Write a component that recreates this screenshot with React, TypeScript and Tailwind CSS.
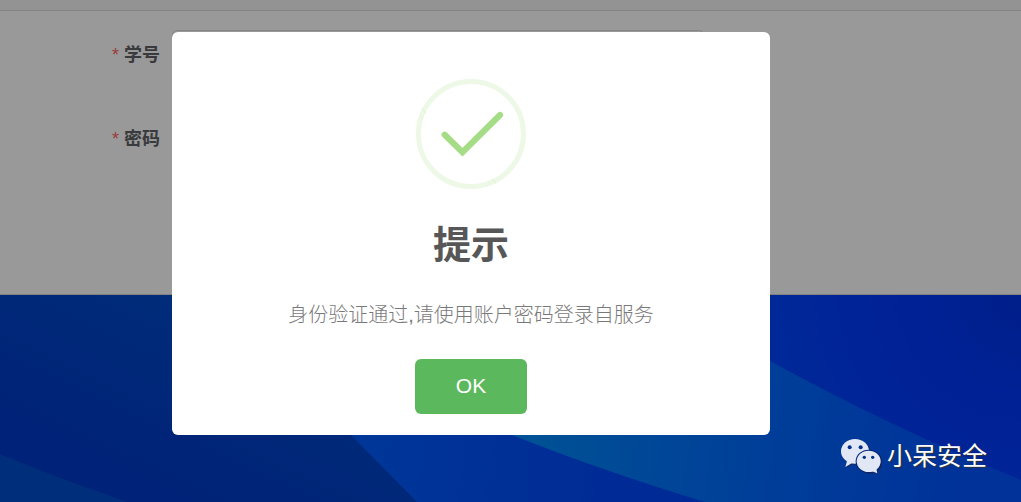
import { useState } from 'react'

const fields = [
  { id: 'studentNo', label: '学号', type: 'text' },
  { id: 'password', label: '密码', type: 'password' },
]

const Backdrop = () => {
  return (
    <svg className='block w-full h-full' viewBox='0 0 1021 207' preserveAspectRatio='xMidYMin slice' aria-hidden='true'>
      <defs>
        <linearGradient id='navy' gradientUnits='userSpaceOnUse' x1='190' y1='0' x2='110' y2='170'>
          <stop offset='0' stopColor='#004bcb' />
          <stop offset='1' stopColor='#003ac8' />
        </linearGradient>
        <linearGradient id='royal' gradientUnits='userSpaceOnUse' x1='380' y1='150' x2='640' y2='190'>
          <stop offset='0' stopColor='#005afd' />
          <stop offset='1' stopColor='#0046fa' />
        </linearGradient>
        <linearGradient id='teal' gradientUnits='userSpaceOnUse' x1='530' y1='130' x2='960' y2='190'>
          <stop offset='0' stopColor='#0088fa' />
          <stop offset='.55' stopColor='#0068ff' />
          <stop offset='1' stopColor='#0054ff' />
        </linearGradient>
        <radialGradient id='deep' gradientUnits='userSpaceOnUse' cx='1021' cy='0' r='270'>
          <stop offset='0' stopColor='#0035e6' />
          <stop offset='.4' stopColor='#0037fa' />
          <stop offset='1' stopColor='#0045ff' />
        </radialGradient>
      </defs>
      <rect width='1021' height='207' fill='url(#navy)' />
      <path d='M0 159Q60 184 128 207H0Z' fill='#004dcb' />
      <path d='M210 0L351 140L417 207H1021V0Z' fill='url(#royal)' />
      <path d='M260 0Q400 100 512 140Q600 175 705 207H1021V0Z' fill='url(#teal)' />
      <path d='M650 0Q710 34 770 66Q890 132 1021 185V0Z' fill='url(#deep)' />
    </svg>
  )
}

const SuccessIcon = () => {
  return (
    <svg className='w-[110px] h-[110px]' viewBox='0 0 110 110' fill='none' aria-hidden='true'>
      <circle cx='55' cy='55' r='52.5' stroke='#edf8e7' strokeWidth='5' />
      <path d='M6.5 30.5L9.8 33.8M76 100.3L80 104.3' stroke='#b9e4a2' strokeWidth='.7' strokeDasharray='1 .7' />
      <path d='M4 36L7 39M71.3 102L74 105' stroke='#dff2d5' strokeWidth='.7' />
      <path d='M28.7 55.7L46.5 73.2L84 36' stroke='#a5dc86' strokeWidth='6.2' strokeLinecap='round' />
    </svg>
  )
}

const WechatIcon = () => {
  return (
    <svg className='w-10 h-[35px] drop-shadow-[1px_1px_0_#1a2a5e]' viewBox='0 0 120 105' aria-hidden='true'>
      <g fill='#e1e7f4'>
        <ellipse cx='42' cy='37' rx='42' ry='37' />
        <path d='M19 62L13 84L37 70Z' />
      </g>
      <ellipse cx='83' cy='67' rx='39' ry='35' fill='#00267a' />
      <g fill='#e1e7f4'>
        <ellipse cx='83' cy='67' rx='36' ry='32' />
        <path d='M89 95L109 103L105 85Z' />
      </g>
      <g fill='#00308c'>
        <circle cx='26' cy='25' r='6' />
        <circle cx='59' cy='25' r='6' />
        <circle cx='70' cy='55' r='5' />
        <circle cx='95' cy='55' r='5' />
      </g>
    </svg>
  )
}

const App = () => {

  const [open, setOpen] = useState(true)

  return (
    <div className='relative flex flex-col min-h-screen overflow-hidden font-["Liberation_Sans","Noto_Sans_CJK_SC",sans-serif]'>
      <header className='h-[11px] bg-[#f6f6f6] border-b border-[#dcdcdc]'></header>
      <form className='flex flex-col gap-[34px] h-[284px] pt-[19px] bg-white border-b border-[#d8d8d8]'>
        {fields.map((field) => (
          <div className='flex items-center gap-3' key={field.id}>
            <label htmlFor={field.id} className='flex justify-end gap-[5px] w-40 text-[18px] font-bold text-[#606266]'>
              <span className='font-normal text-[#ff6464]'>*</span>
              {field.label}
            </label>
            <input id={field.id} type={field.type} className='w-[532px] h-[50px] px-4 border border-[#dcdfe6] rounded-[5px] outline-none' />
          </div>
        ))}
      </form>
      <div className='flex-1 basis-0 min-h-0 relative'>
        <div className='absolute inset-0'>
          <Backdrop />
        </div>
      </div>

      {open && (
        <div className='absolute inset-0 flex justify-center items-start pt-8 pr-[79px] bg-black/40'>
          <div role='dialog' aria-labelledby='tip-title' className='flex flex-col items-center w-[598px] pt-[47px] pb-[21px] bg-white rounded-[6px]'>
            <SuccessIcon />
            <h2 id='tip-title' className='mt-[31px] text-[38px] leading-[50px] font-bold text-[#575757]'>提示</h2>
            <p className='mt-[29px] text-[20px] leading-[32px] font-light text-[#797979]'>身份验证通过,请使用账户密码登录自服务</p>
            <button type='button' onClick={() => setOpen(false)} className='mt-7 w-28 h-[55px] pb-[2px] rounded-[6px] bg-[#5cb85c] text-[21px] text-white cursor-pointer'>OK</button>
          </div>
        </div>
      )}

      <div className='absolute right-[34px] bottom-7 flex items-center gap-[6px] text-white'>
        <WechatIcon />
        <span className='text-[25px] leading-[36px] [text-shadow:1px_1px_1px_#333]'>小呆安全</span>
      </div>
    </div>
  )
}

export default App
